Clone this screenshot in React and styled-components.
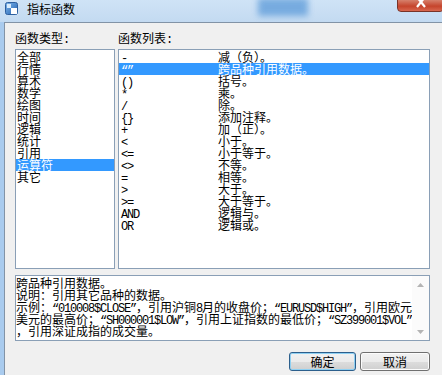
import React from "react";
import styled, { createGlobalStyle } from "styled-components";

const categories = ["全部", "行情", "算术", "数学", "绘图", "时间", "逻辑", "统计", "引用", "运算符", "其它"];

const operators = [
  ["-", "减（负）。"],
  ["“”", "跨品种引用数据。"],
  ["()", "括号。"],
  ["*", "乘。"],
  ["/", "除。"],
  ["{}", "添加注释。"],
  ["+", "加（正）。"],
  ["<", "小于。"],
  ["<=", "小于等于。"],
  ["<>", "不等。"],
  ["=", "相等。"],
  [">", "大于。"],
  [">=", "大于等于。"],
  ["AND", "逻辑与。"],
  ["OR", "逻辑或。"],
];

const description = [
  "跨品种引用数据。",
  "说明：引用其它品种的数据。",
  "示例：“010008$CLOSE”，引用沪铜8月的收盘价；“EURUSD$HIGH”，引用欧元",
  "美元的最高价；“SH000001$LOW”，引用上证指数的最低价；“SZ399001$VOL”",
  "，引用深证成指的成交量。",
];

// SimSun draws ascii and curly quotes at half width, so those runs get a narrow mono face
function withLatin(text) {
  return text
    .split(/([\x21-\x7e“”]+)/)
    .map((part, i) => (i % 2 ? <Latin key={i}>{part}</Latin> : part));
}

export default function App() {
  return (
    <>
      <GlobalStyle />
      <Window>
        <TitleBar>
          <Glow />
          <AppIcon width="13" height="13" viewBox="0 0 13 13">
            <defs>
              <linearGradient id="ico" x1="0" y1="0" x2="1" y2="1">
                <stop offset="0" stopColor="#7fb6ea" />
                <stop offset="1" stopColor="#1f5fb0" />
              </linearGradient>
            </defs>
            <rect x="0.5" y="0.5" width="12" height="12" rx="2" fill="url(#ico)" stroke="#2d5f9e" />
            <rect x="6" y="6" width="6" height="6" fill="#ffffff" />
            <rect x="2" y="2" width="4" height="4" fill="#d8ebfb" />
          </AppIcon>
          <Title>指标函数</Title>
          <CloseButton>
            <svg width="10" height="9" viewBox="0 0 10 9">
              <path d="M1 -2 L9 8 M9 -2 L1 8" stroke="#ffffff" strokeWidth="2.2" />
            </svg>
          </CloseButton>
        </TitleBar>
        <Client>
          <FieldLabel>
            函数类型<Latin>:</Latin>
          </FieldLabel>
          <FieldLabel>
            函数列表<Latin>:</Latin>
          </FieldLabel>
          <ListBox>
            {categories.map((name) => (
              <Row key={name} $selected={name === "运算符"}>
                {name}
              </Row>
            ))}
          </ListBox>
          <ListBox>
            {operators.map(([sym, text], i) => (
              <Row key={sym} $selected={i === 1}>
                <SymbolCell>{withLatin(sym)}</SymbolCell>
                {text}
              </Row>
            ))}
          </ListBox>
          <DescBox>
            <DescText>
              {description.map((line, i) => (
                <DescLine key={i}>{withLatin(line)}</DescLine>
              ))}
            </DescText>
            <ScrollBar>
              <ScrollArrow>
                <svg width="7" height="4" viewBox="0 0 7 4">
                  <path d="M0 4 L3.5 0 L7 4 Z" fill="#b4b4b4" />
                </svg>
              </ScrollArrow>
              <ScrollArrow>
                <svg width="7" height="4" viewBox="0 0 7 4">
                  <path d="M0 0 L3.5 4 L7 0 Z" fill="#b4b4b4" />
                </svg>
              </ScrollArrow>
            </ScrollBar>
          </DescBox>
          <ButtonRow>
            <DialogButton $default $w={67}>确定</DialogButton>
            <DialogButton $w={70}>取消</DialogButton>
          </ButtonRow>
        </Client>
      </Window>
    </>
  );
}

const GlobalStyle = createGlobalStyle`
  body {
    margin: 0;
    background: #f0f0f0;
  }
`;

const Window = styled.div`
  width: 442px;
  height: 375px;
  display: flex;
  flex-direction: column;
  overflow: hidden;
  background: linear-gradient(to right, #a9cbee, #bcd8f2);
  font-family: "Noto Sans CJK SC", sans-serif;
  font-size: 12px;
  color: #000;
`;

const TitleBar = styled.div`
  position: relative;
  height: 22px;
  flex: none;
  display: flex;
  align-items: flex-start;
  gap: 9px;
  padding: 2px 0 0 5px;
  box-sizing: border-box;
  background: linear-gradient(to bottom, #cfe3f6, #c3daf1);
`;

const Glow = styled.div`
  position: absolute;
  left: 258px;
  top: -2px;
  width: 50px;
  height: 18px;
  background: #5b9ad9;
  filter: blur(3px);
  opacity: 0.75;
`;

const AppIcon = styled.svg`
  position: relative;
  flex: none;
`;

const Title = styled.span`
  position: relative;
  font-size: 12px;
  line-height: 13px;
`;

const CloseButton = styled.div`
  position: absolute;
  right: -2px;
  top: -2px;
  width: 47px;
  height: 14px;
  display: flex;
  align-items: flex-start;
  justify-content: center;
  box-sizing: border-box;
  border: 1px solid #7a3327;
  border-radius: 0 0 4px 4px;
  background: linear-gradient(to bottom, #d98a76, #c5442c 60%, #d8674f);
  overflow: hidden;
`;

const Client = styled.div`
  flex: 1;
  margin-left: 4px;
  border-top: 1px solid #8293a6;
  border-left: 1px solid #8293a6;
  background: #f0f0f0;
  padding: 9px 0 0 10px;
  display: grid;
  grid-template-columns: 100px 312px;
  grid-template-rows: 17px 220px auto auto;
  column-gap: 3px;
  align-content: start;
`;

const FieldLabel = styled.div`
  line-height: 12px;
  white-space: nowrap;
`;

const ListBox = styled.div`
  box-sizing: border-box;
  border: 1px solid #8a9fb6;
  background: #ffffff;
  padding-top: 1px;
  overflow: hidden;
`;

const Row = styled.div`
  display: flex;
  height: 12px;
  line-height: 12px;
  padding-left: 1px;
  white-space: nowrap;
  background: ${(p) => (p.$selected ? "#3399ff" : "transparent")};
  color: ${(p) => (p.$selected ? "#ffffff" : "#000000")};
`;

const SymbolCell = styled.span`
  width: 97px;
  padding-left: 1px;
  flex: none;
`;

const Latin = styled.span`
  font-family: "Liberation Mono", monospace;
  font-size: 12px;
  letter-spacing: -1.2px;
`;

const DescBox = styled.div`
  grid-column: 1 / 3;
  margin-top: 6px;
  height: 66px;
  box-sizing: border-box;
  border: 1px solid #8a9fb6;
  background: #ffffff;
  display: flex;
`;

const DescText = styled.div`
  flex: 1;
  overflow: hidden;
  padding: 1px 0 0 0;
`;

const DescLine = styled.div`
  height: 12px;
  line-height: 12px;
  white-space: nowrap;
`;

const ScrollBar = styled.div`
  width: 17px;
  flex: none;
  display: flex;
  flex-direction: column;
  justify-content: space-between;
  background: #fbfbfb;
`;

const ScrollArrow = styled.div`
  height: 17px;
  display: flex;
  align-items: center;
  justify-content: center;
`;

const ButtonRow = styled.div`
  grid-column: 1 / 3;
  margin-top: 11px;
  display: flex;
  justify-content: flex-end;
  gap: 4px;
`;

const DialogButton = styled.button`
  width: ${(p) => p.$w}px;
  height: 19px;
  padding: 0;
  font-family: "Noto Sans CJK SC", sans-serif;
  font-size: 12px;
  line-height: 12px;
  color: #000;
  border-radius: 3px;
  border: 1px solid ${(p) => (p.$default ? "#2c5f8c" : "#707070")};
  box-shadow: ${(p) => (p.$default ? "inset 0 0 0 1px #8fd0f2" : "inset 0 0 0 1px #fcfcfc")};
  background: linear-gradient(to bottom, #f2f2f2 0%, #ebebeb 50%, #dddddd 51%, #cfcfcf 100%);
`;
